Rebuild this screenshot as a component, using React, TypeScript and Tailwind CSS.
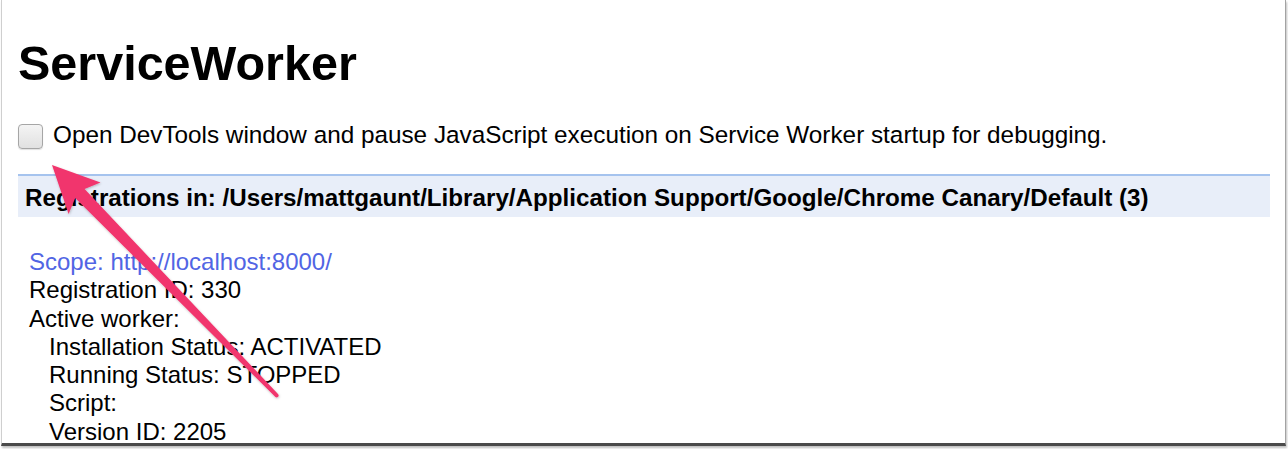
import * as React from "react";

const font = { fontFamily: '"Liberation Sans", Arial, Helvetica, sans-serif' };

/** Pink callout arrow drawn over the page (annotation layer). */
function CalloutArrow() {
  return (
    <svg
      className="pointer-events-none absolute inset-0 h-full w-full"
      viewBox="0 0 1288 449"
      aria-hidden="true"
    >
      <defs>
        <filter id="arrow-shadow" x="-10%" y="-10%" width="120%" height="120%">
          <feDropShadow dx="0.5" dy="1" stdDeviation="1" floodColor="#000" floodOpacity="0.25" />
        </filter>
      </defs>
      <path
        d="M52 165 L100.5 182.5 L84.6 189.1 L278.2 394.2 A2 2 0 0 1 275.4 397 L75.2 198.1 L68.6 214 Z"
        fill="#f1366d"
        filter="url(#arrow-shadow)"
      />
    </svg>
  );
}

export default function App() {
  const [pauseOnStart, setPauseOnStart] = React.useState(false);

  return (
    <div className="relative h-[449px] w-[1288px] overflow-hidden bg-white text-black" style={font}>
      {/* window frame */}
      <div className="ml-px h-[446px] w-[1285px] overflow-hidden border-r border-b-[3px] border-l border-r-[#a3a3a3] border-b-[#4a4a4a] border-l-[#cfcfcf] bg-white pr-[15px] pl-[16px] shadow-[1px_2px_2px_rgba(0,0,0,0.25)]">
        <h1 className="mt-[35px] text-[48.5px] leading-[56px] font-bold">ServiceWorker</h1>

        <label className="mt-[30px] flex items-start text-[24.3px] leading-[28px]">
          <button
            type="button"
            role="checkbox"
            aria-checked={pauseOnStart}
            onClick={() => setPauseOnStart((v) => !v)}
            className="mt-[3px] size-[25px] shrink-0 rounded-[4px] border border-[#a6a6a6] bg-gradient-to-b from-[#f4f4f4] to-[#e1e1e1] shadow-[0_1px_1px_rgba(0,0,0,0.12)]"
          />
          <span className="ml-[10px]">
            Open DevTools window and pause JavaScript execution on Service Worker startup for debugging.
          </span>
        </label>

        <div className="mt-[25px] border-t-2 border-[#a5c3ee] bg-[#e8eef9] pt-[8px] pb-[5px] pl-[7px] text-[24.2px] leading-[28px] font-bold">
          Registrations in: /Users/mattgaunt/Library/Application Support/Google/Chrome Canary/Default (3)
        </div>

        <div className="mt-[31px] pl-[11px] text-[24px] leading-[28.3px]">
          <a href="#" className="block text-[#5165e4]">
            Scope: http://localhost:8000/
          </a>
          <div>Registration ID: 330</div>
          <div>Active worker:</div>
          <div className="pl-[20px]">
            <div>Installation Status: ACTIVATED</div>
            <div>Running Status: STOPPED</div>
            <div>Script:</div>
            <div>Version ID: 2205</div>
          </div>
        </div>
      </div>

      <CalloutArrow />
    </div>
  );
}
